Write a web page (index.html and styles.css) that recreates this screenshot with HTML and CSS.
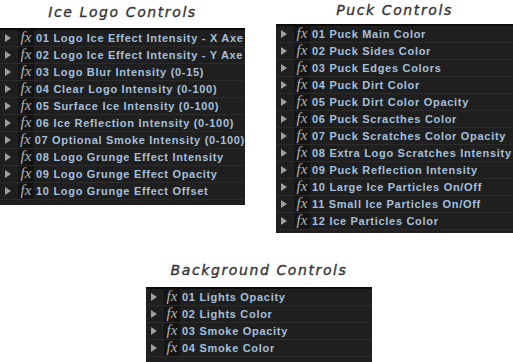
FILE: index.html
```html
<!DOCTYPE html>
<html lang="en">
<head>
  <meta charset="UTF-8">
  <title>Effect Controls</title>
  <link rel="stylesheet" href="styles.css">
</head>
<body>
  <div class="top">
    <section class="group ice">
      <h2>Ice Logo Controls</h2>
      <ul class="panel">
        <li><span class="twirl"></span><span class="fx">fx</span>01 Logo Ice Effect Intensity - X Axe</li>
        <li><span class="twirl"></span><span class="fx">fx</span>02 Logo Ice Effect Intensity - Y Axe</li>
        <li><span class="twirl"></span><span class="fx">fx</span>03 Logo Blur Intensity (0-15)</li>
        <li><span class="twirl"></span><span class="fx">fx</span>04 Clear Logo Intensity (0-100)</li>
        <li><span class="twirl"></span><span class="fx">fx</span>05 Surface Ice Intensity (0-100)</li>
        <li><span class="twirl"></span><span class="fx">fx</span>06 Ice Reflection Intensity (0-100)</li>
        <li><span class="twirl"></span><span class="fx">fx</span>07 Optional Smoke Intensity (0-100)</li>
        <li><span class="twirl"></span><span class="fx">fx</span>08 Logo Grunge Effect Intensity</li>
        <li><span class="twirl"></span><span class="fx">fx</span>09 Logo Grunge Effect Opacity</li>
        <li><span class="twirl"></span><span class="fx">fx</span>10 Logo Grunge Effect Offset</li>
      </ul>
    </section>

    <section class="group puck">
      <h2>Puck Controls</h2>
      <ul class="panel">
        <li><span class="twirl"></span><span class="fx">fx</span>01 Puck Main Color</li>
        <li><span class="twirl"></span><span class="fx">fx</span>02 Puck Sides Color</li>
        <li><span class="twirl"></span><span class="fx">fx</span>03 Puck Edges Colors</li>
        <li><span class="twirl"></span><span class="fx">fx</span>04 Puck Dirt Color</li>
        <li><span class="twirl"></span><span class="fx">fx</span>05 Puck Dirt Color Opacity</li>
        <li><span class="twirl"></span><span class="fx">fx</span>06 Puck Scracthes Color</li>
        <li><span class="twirl"></span><span class="fx">fx</span>07 Puck Scratches Color Opacity</li>
        <li><span class="twirl"></span><span class="fx">fx</span>08 Extra Logo Scratches Intensity</li>
        <li><span class="twirl"></span><span class="fx">fx</span>09 Puck Reflection Intensity</li>
        <li><span class="twirl"></span><span class="fx">fx</span>10 Large Ice Particles On/Off</li>
        <li><span class="twirl"></span><span class="fx">fx</span>11 Small Ice Particles On/Off</li>
        <li><span class="twirl"></span><span class="fx">fx</span>12 Ice Particles Color</li>
      </ul>
    </section>
  </div>

  <section class="group background">
    <h2>Background Controls</h2>
    <ul class="panel">
      <li><span class="twirl"></span><span class="fx">fx</span>01 Lights Opacity</li>
      <li><span class="twirl"></span><span class="fx">fx</span>02 Lights Color</li>
      <li><span class="twirl"></span><span class="fx">fx</span>03 Smoke Opacity</li>
      <li><span class="twirl"></span><span class="fx">fx</span>04 Smoke Color</li>
    </ul>
  </section>
</body>
</html>
```

FILE: styles.css
```css
:root {
  --panel-bg: #1f1f1f;
  --row-line: #2b2b2b;
  --label-color: #a5c0dd;
  --title-color: #333;
}

* {
  box-sizing: border-box;
}

body {
  margin: 0;
  background: #fff;
  font-family: "Liberation Sans", Arial, sans-serif;
  overflow: hidden;
}

.top {
  display: grid;
  grid-template-columns: 245px 237px;
  column-gap: 31px;
  align-items: start;
}

h2 {
  margin: 0;
  text-align: center;
  font-family: "DejaVu Sans", Verdana, sans-serif;
  font-style: italic;
  font-weight: normal;
  font-size: 14px;
  letter-spacing: 1.6px;
  color: var(--title-color);
  -webkit-text-stroke: 0.35px var(--title-color);
  line-height: 18px;
}

.ice h2 {
  padding-top: 3px;
  height: 28px;
}

.puck h2 {
  padding-top: 1px;
  height: 24px;
}

.background {
  width: 226px;
  margin: 28px 0 0 146px;
}

.background h2 {
  height: 26px;
}

.panel {
  list-style: none;
  margin: 0;
  padding: 0 0 5px;
  background: var(--panel-bg);
  border-top: 2px solid #0c0c0c;
}

.puck .panel {
  padding-bottom: 3px;
}

.panel li {
  display: flex;
  align-items: center;
  height: 17px;
  border-bottom: 1px solid var(--row-line);
  font-size: 11px;
  font-weight: bold;
  letter-spacing: 0.7px;
  color: var(--label-color);
  white-space: nowrap;
}

.twirl {
  width: 0;
  height: 0;
  margin: 0 7px 0 5px;
  border-left: 6px solid #a0a0a0;
  border-top: 4px solid transparent;
  border-bottom: 4px solid transparent;
}

.fx {
  display: inline-block;
  width: 16px;
  height: 16px;
  margin-right: 2px;
  background: #141414;
  font-family: "Liberation Serif", serif;
  font-style: italic;
  font-weight: normal;
  font-size: 15px;
  line-height: 15px;
  letter-spacing: 0;
  text-align: center;
  color: #b5b5b5;
}
```
